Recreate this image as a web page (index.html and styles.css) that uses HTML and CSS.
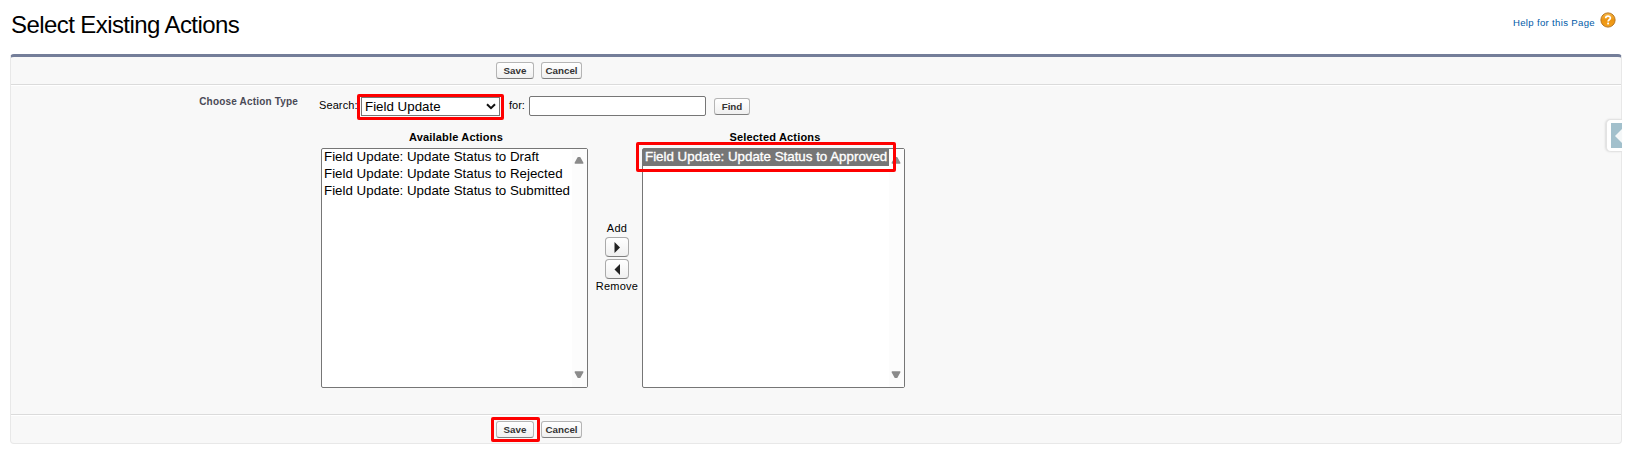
FILE: index.html
```
<!DOCTYPE html>
<html lang="en">
<head>
<meta charset="utf-8">
<title>Select Existing Actions</title>
<link rel="stylesheet" href="styles.css">
</head>
<body>
<header class="page-header">
  <h1 class="title">Select Existing Actions</h1>
  <a class="help"><span class="help-text">Help for this Page</span>
    <svg class="help-icon" width="16" height="16" viewBox="0 0 16 16">
      <defs><linearGradient id="orb" x1="0" y1="0" x2="0" y2="1"><stop offset="0" stop-color="#f7b845"/><stop offset=".5" stop-color="#ec9411"/><stop offset="1" stop-color="#f5a11b"/></linearGradient></defs>
      <circle cx="8" cy="8" r="7.1" fill="url(#orb)" stroke="#b8741c" stroke-width="1"/>
      <path d="M5.7 6.2C5.7 3.4 10.4 3.4 10.4 6.1C10.4 7.7 8.1 7.8 8.1 9.5" fill="none" stroke="#fff" stroke-width="1.7"/>
      <rect x="7.2" y="10.6" width="1.8" height="1.8" fill="#fff"/>
    </svg>
  </a>
</header>
<main class="panel">
  <div class="bar bar-top">
    <button class="btn save">Save</button>
    <button class="btn cancel">Cancel</button>
  </div>
  <div class="body">
    <div class="field-label">Choose Action Type</div>
    <div class="content">
      <div class="search">
        <span class="search-label">Search:</span>
        <div class="select mark mark-select">Field Update
          <svg class="chevron" width="10" height="7" viewBox="0 0 10 7"><path d="M1 1.2L5 5.2L9 1.2" fill="none" stroke="#111" stroke-width="2"/></svg>
        </div>
        <span class="for-label">for:</span>
        <input class="query" type="text">
        <button class="btn find">Find</button>
      </div>
      <div class="dueling">
        <section class="list-col available">
          <h2 class="list-title">Available Actions</h2>
          <div class="listbox">
            <ul class="options">
              <li class="option">Field Update: Update Status to Draft</li>
              <li class="option">Field Update: Update Status to Rejected</li>
              <li class="option">Field Update: Update Status to Submitted</li>
            </ul>
            <div class="scroll">
              <svg width="10" height="8" viewBox="0 0 10 8"><path d="M1.2 7H8.8L5.8 1.6H4.2Z" fill="#8b8b8b" stroke="#8b8b8b" stroke-width="1.4" stroke-linejoin="round"/></svg>
              <svg width="10" height="8" viewBox="0 0 10 8"><path d="M1.2 1H8.8L5.8 6.4H4.2Z" fill="#8b8b8b" stroke="#8b8b8b" stroke-width="1.4" stroke-linejoin="round"/></svg>
            </div>
          </div>
        </section>
        <div class="movers">
          <span class="move-text add-text">Add</span>
          <button class="arrow"><svg width="7" height="11" viewBox="0 0 7 11"><path d="M.5 0L6 5.5L.5 11Z" fill="#222"/></svg></button>
          <button class="arrow"><svg width="7" height="11" viewBox="0 0 7 11"><path d="M6 0L.5 5.5L6 11Z" fill="#222"/></svg></button>
          <span class="move-text remove-text">Remove</span>
        </div>
        <section class="list-col selected">
          <h2 class="list-title">Selected Actions</h2>
          <div class="listbox">
            <ul class="options">
              <li class="option chosen mark mark-option"><span class="chosen-text">Field Update: Update Status to Approved</span></li>
            </ul>
            <div class="scroll">
              <svg width="10" height="8" viewBox="0 0 10 8"><path d="M1.2 7H8.8L5.8 1.6H4.2Z" fill="#8b8b8b" stroke="#8b8b8b" stroke-width="1.4" stroke-linejoin="round"/></svg>
              <svg width="10" height="8" viewBox="0 0 10 8"><path d="M1.2 1H8.8L5.8 6.4H4.2Z" fill="#8b8b8b" stroke="#8b8b8b" stroke-width="1.4" stroke-linejoin="round"/></svg>
            </div>
          </div>
        </section>
      </div>
    </div>
  </div>
  <div class="bar bar-bottom">
    <span class="mark mark-save"><button class="btn save">Save</button></span>
    <button class="btn cancel">Cancel</button>
  </div>
</main>
<aside class="drawer"><span class="drawer-handle"><svg width="7" height="14" viewBox="0 0 7 14"><path d="M7 0V14L0 7Z" fill="#f4f7f8"/></svg></span></aside>
</body>
</html>
```
FILE: styles.css
```
* { box-sizing: border-box; }
body {
  margin: 0;
  height: 452px;
  overflow: hidden;
  background: #fff;
  color: #000;
  font-family: "Liberation Sans", Arial, sans-serif;
  font-size: 11px;
}
.page-header {
  display: flex;
  justify-content: space-between;
  height: 54px;
  padding: 11px 13px 0 11px;
}
.title { margin: 0; font-size: 24px; font-weight: 400; line-height: 28px; letter-spacing: -0.58px; white-space: nowrap; }
.help { display: flex; height: 18px; gap: 5px; color: #015ba7; font-size: 9.6px; }
.help-text { line-height: 12px; padding-top: 6px; letter-spacing: 0.32px; }
.help-icon { margin-top: 1px; }
.panel {
  width: 1612px;
  height: 390px;
  margin-left: 10px;
  border: 1px solid #e8e8e8;
  border-top: 3px solid #747e99;
  border-radius: 4px;
  background: #f8f8f8;
}
.bar { display: flex; align-items: flex-start; gap: 7px; padding-left: 485px; }
.bar-top { height: 28px; padding-top: 5px; border-bottom: 1px solid #dbdbdb; }
.bar-bottom { height: 29px; padding-top: 6px; border-top: 1px solid #dbdbdb; box-shadow: inset 0 1px #fff; }
.btn {
  height: 17px;
  padding: 0;
  border: 1px solid #b5b5b5;
  border-bottom-color: #7f7f7f;
  border-radius: 3px;
  background: linear-gradient(#fff, #f0f0f0);
  color: #333;
  font: bold 9.8px/14px "Liberation Sans", Arial, sans-serif;
}
.save { width: 38px; display: block; }
.cancel { width: 41px; }
.find { width: 36px; margin: 2px 0 0 8px; }
.body { display: flex; height: 329px; box-shadow: inset 0 1px #fff; }
.field-label { width: 287px; padding-top: 11px; text-align: right; color: #4a4a56; font-size: 10px; font-weight: 700; line-height: 12px; letter-spacing: 0.18px; }
.content { padding: 11px 0 0 20px; }
.search { display: flex; height: 36px; margin-left: 1px; }
.search-label { width: 42px; padding-top: 3px; line-height: 13px; letter-spacing: 0.1px; }
.select {
  display: flex;
  justify-content: space-between;
  width: 139px;
  height: 19px;
  margin-top: 1px;
  padding: 0 4px 0 3px;
  border: 1px solid #767676;
  background: #fff;
  font-size: 13.333px;
  line-height: 17px;
}
.chevron { margin-top: 5px; margin-right: -1px; }
.for-label { width: 29px; padding: 3px 0 0 9px; line-height: 13px; }
.query { width: 177px; height: 20px; border: 1px solid #767676; border-radius: 2px; background: #fff; padding: 0; }
.dueling { display: flex; margin-left: 1px; }
.list-title { margin: -1px 0 0; height: 17px; padding-left: 3px; font-size: 11px; line-height: 13px; text-align: center; letter-spacing: 0.18px; }
.available { width: 267px; margin-left: 2px; }
.selected { width: 263px; }
.listbox { display: flex; height: 240px; border: 1px solid #767676; border-radius: 2px; background: #fff; }
.options { flex: 1; margin: 0; padding: 0; list-style: none; }
.option { height: 17px; padding-left: 2px; font-size: 13.333px; line-height: 15px; white-space: nowrap; }
.chosen { background: #767676; color: #fff; }
.chosen-text { -webkit-text-stroke: 0.35px #fff; }
.scroll { display: flex; flex-direction: column; justify-content: space-between; align-items: center; width: 15px; padding: 7px 1px 8px 0; background: #fcfcfc; }
.movers { display: flex; flex-direction: column; align-items: center; width: 54px; padding-top: 90px; padding-left: 4px; }
.move-text { line-height: 13px; white-space: nowrap; letter-spacing: 0.25px; }
.add-text { height: 15px; }
.remove-text { margin-top: -1px; }
.arrow { display: flex; align-items: center; justify-content: center; width: 24px; height: 20px; margin-bottom: 2px; padding: 0; border: 1px solid #aaa; border-bottom-color: #7f7f7f; border-radius: 4px; background: linear-gradient(#fff, #f0f0f0); }
.mark { position: relative; }
.mark::after { content: ""; position: absolute; border: 3px solid #fe0000; border-radius: 2px; z-index: 1; }
.mark-select::after { inset: -4px -5px -5px -5px; }
.mark-option::after { inset: -7px -7px -6px -7px; }
.mark-save::after { inset: -4px -6px -4px -5px; }
.content { margin-left: -1px; padding-left: 21px; }
.drawer {
  position: absolute;
  top: 119px;
  right: 7px;
  width: 16px;
  height: 33px;
  padding: 3px 0 0 4px;
  border: 1px solid #e3e3e3;
  border-right: 0;
  border-radius: 5px 0 0 5px;
  background: #fff;
  box-shadow: -1px 0 2px #ddd;
}
.drawer-handle { display: flex; justify-content: flex-end; align-items: center; width: 11px; height: 25px; background: #a2c0cc; }
```
